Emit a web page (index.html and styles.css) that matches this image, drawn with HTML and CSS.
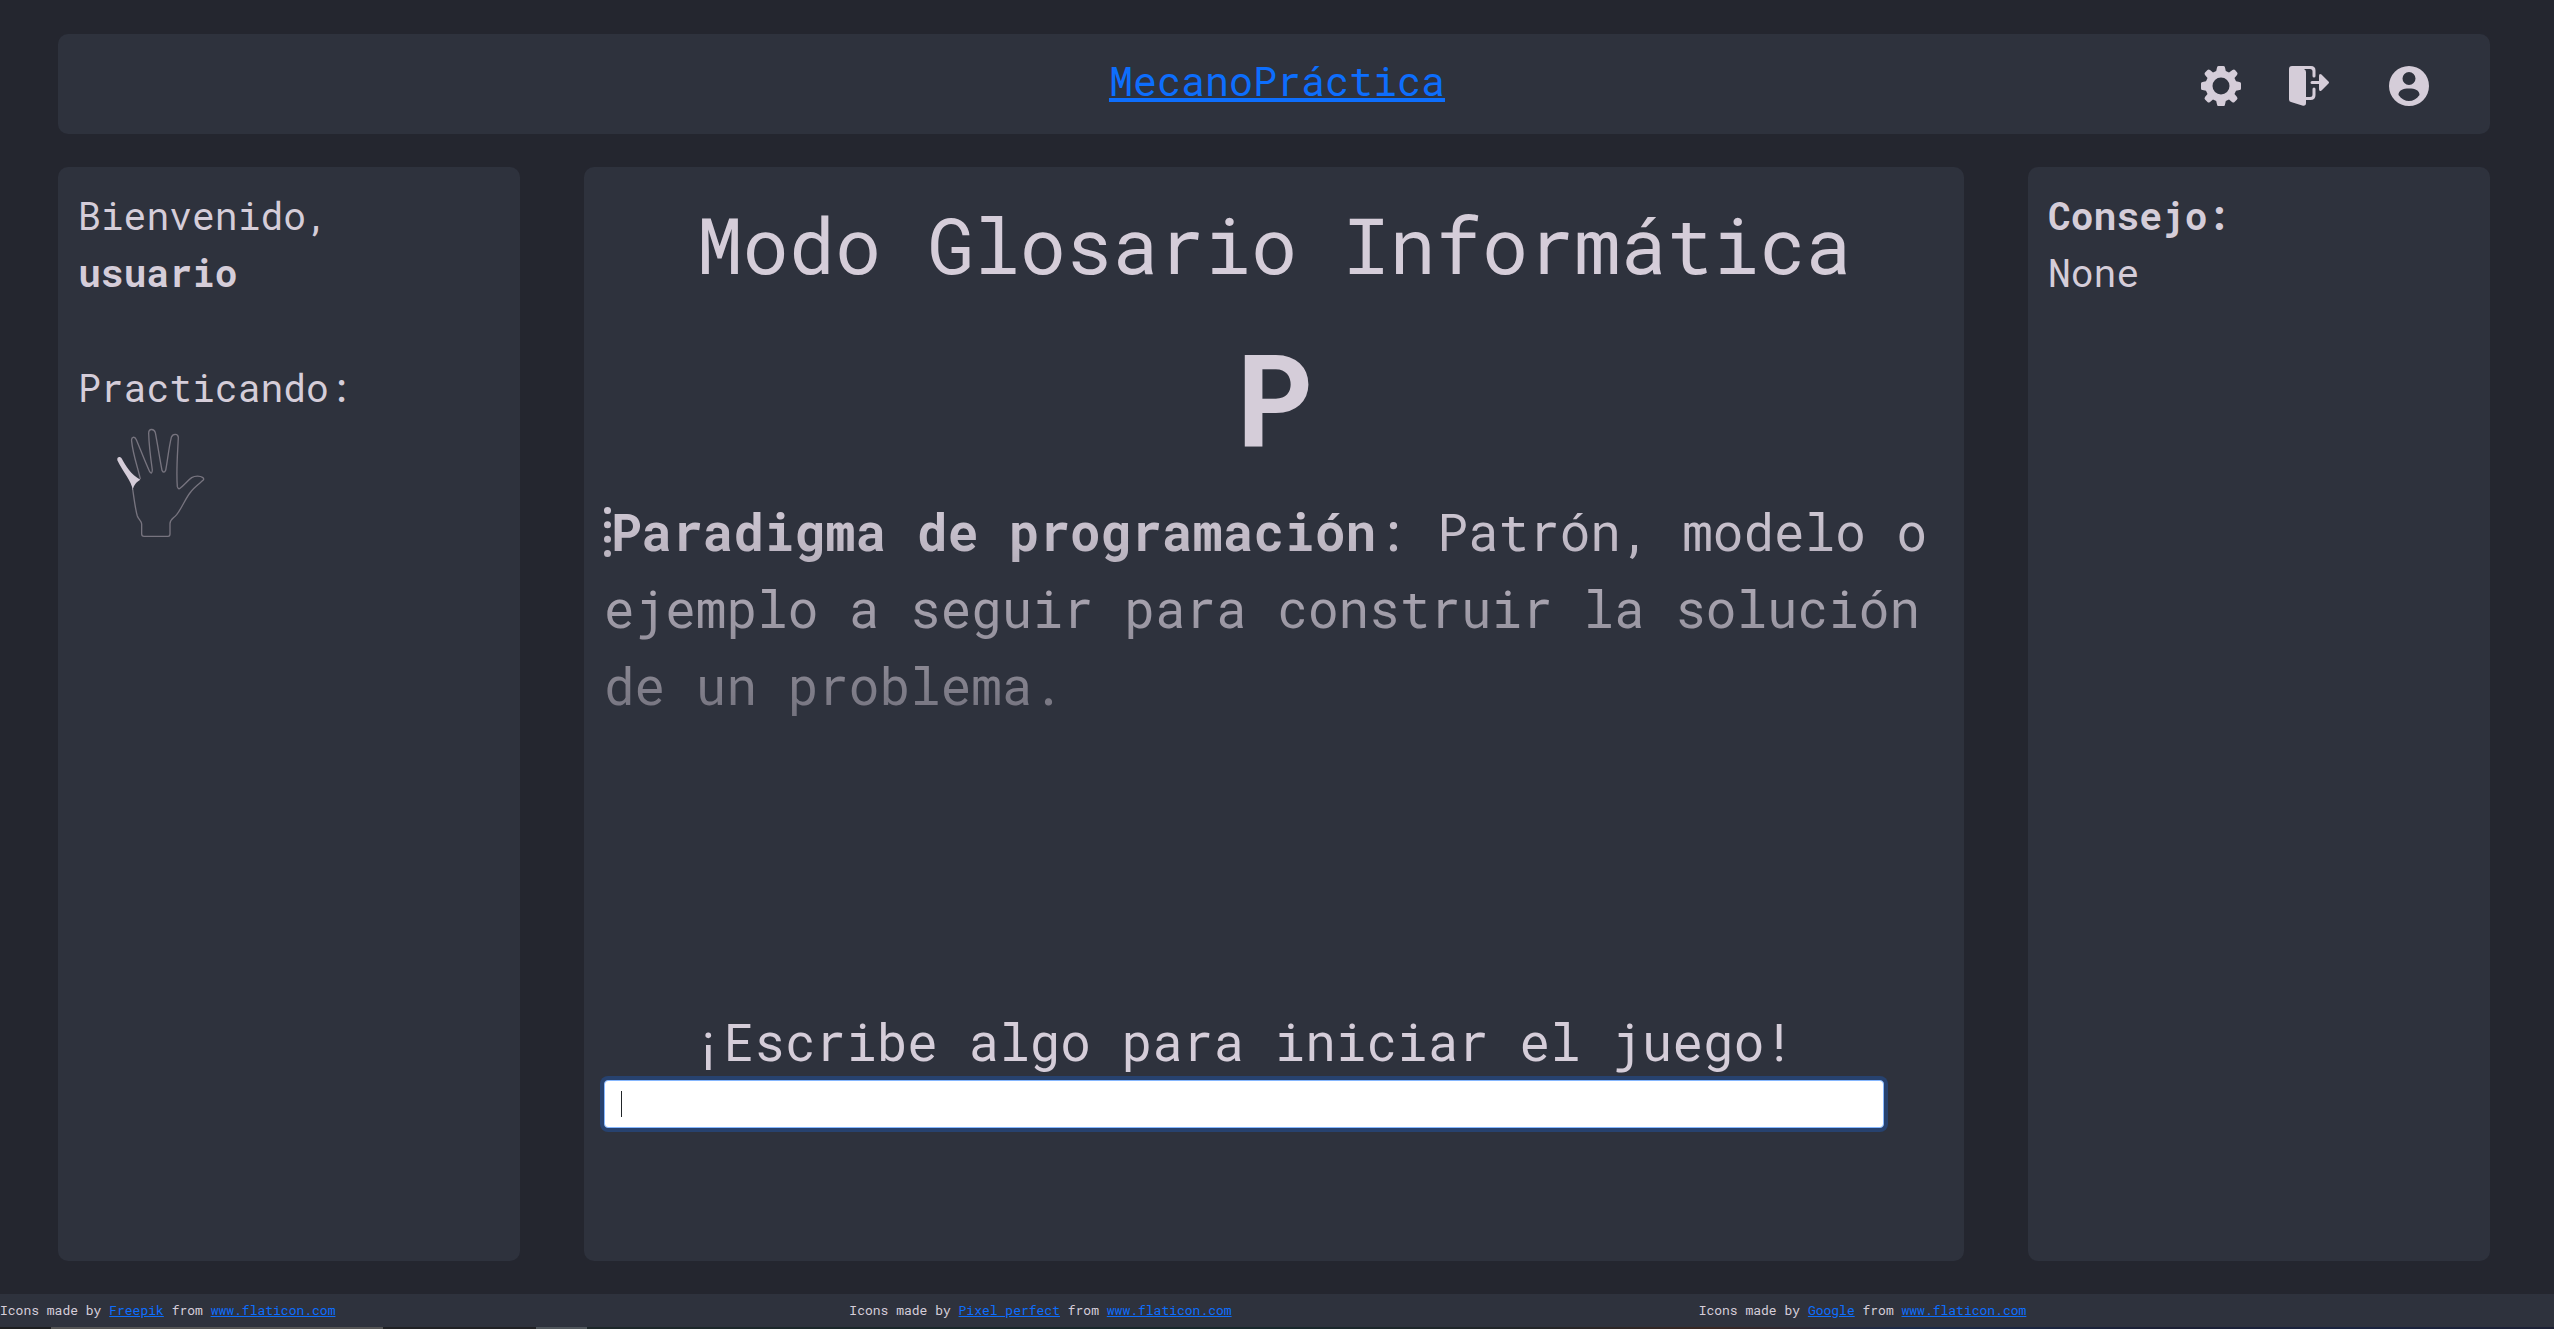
FILE: index.html
```html
<!DOCTYPE html>
<html lang="es">
<head>
<meta charset="utf-8">
<meta name="viewport" content="width=device-width, initial-scale=1">
<title>MecanoPráctica</title>
<link rel="stylesheet" href="styles.css">
</head>
<body>
<div class="page">
  <header class="panel topbar">
    <a class="brand" href="#">MecanoPráctica</a>
    <nav class="actions">
      <a href="#" aria-label="Ajustes"><svg class="icon" viewBox="0 0 40 40"><path fill-rule="evenodd" d="M17.500 0h5Q24 0 24 1.500L24.800 5L28 6.500L31.500 4Q33 3 34 4L36.200 6.500Q37 7.500 36 9L33.500 12L35 15.200L38.500 16Q40 16 40 17.500V22.500Q40 24 38.500 24L35 24.800L33.500 28L36 31Q37 32.500 36 33.500L33.500 36Q32.500 37 31 36L28 33.500L24.800 35L24 38.500Q24 40 22.500 40H17.500Q16 40 16 38.500L15.200 35L12 33.500L9 36Q7.500 37 6.500 36L4 33.500Q3 32.500 4 31L6.500 28L5 24.800L1.500 24Q0 24 0 22.500V17.500Q0 16 1.500 16L5 15.200L6.500 12L4 9Q3 7.500 4 6.500L6.500 4Q7.500 3 9 4L12 6.500L15.200 5L16 1.500Q16 0 17.500 0zM20 11.500a8.500 8.500 0 1 0 0 17a8.500 8.500 0 1 0 0-17z"/></svg></a>
      <a href="#" aria-label="Salir"><svg class="icon" viewBox="0 0 40 40"><path fill-rule="evenodd" d="M3 0h19q4.500 0 4.500 4.500V10a1.500 1.500 0 0 1-3 0V5.500Q23.500 3 21 3h-6q2 1 2 3v25h4q2.500 0 2.500-2.500V23a1.500 1.500 0 0 1 3 0v6q0 5-5 5H17v3q0 3-3 2.700L2 36q-2-.5-2-2.500V3Q0 0 3 0z"/><path d="M23 15h7v-5q0-3 2.500-1.500l7 7q1 1 0 2l-7 7Q30 26 30 23v-5h-7a1.500 1.500 0 0 1 0-3z"/></svg></a>
      <a class="profile" href="#" aria-label="Perfil"><svg class="icon" viewBox="0 0 40 40"><path fill-rule="evenodd" d="M20 0a20 20 0 1 0 0 40a20 20 0 1 0 0-40zM20 6a6.500 6.500 0 1 1 0 13a6.500 6.500 0 1 1 0-13zM20 22.500c6 0 10.500 1.500 10.500 6.500c-3 4-6.500 6-10.500 6s-7.500-2-10.500-6c0-5 4.500-6.500 10.500-6.500z"/></svg></a>
    </nav>
  </header>

  <main class="columns">
    <aside class="panel side">
      <p>Bienvenido,<br><strong>usuario</strong></p>
      <p class="section">Practicando:</p>
      <svg class="hand" viewBox="24 0 300 375" role="img" aria-label="Meñique izquierdo"><path class="outline" d="M68 207C72 235 76 268 82 288C86 300 95 303 95 312V342Q95 349 102 349H174Q180 349 180 342V312C179 298 190 296 200 284C217 262 225 237 242 216C252 202 269 190 279 181Q283 177 279 173C270 167 255 167 245 173C233 181 224 194 211 204Q205 210 202 200C198 150 203 100 205 52C204 40 188 40 184 52C176 85 173 120 167 151Q162 162 156 151C149 115 143 75 136 38C132 25 116 25 116 40C117 80 122 115 127 150Q126 165 119 155C105 125 92 90 79 59C74 48 63 50 65 64C69 105 83 140 91 177"/><path class="finger" d="M68 210C66 185 37 154 22 121C20 110 31 108 36 117C48 138 62 163 91 179C78 187 72 194 68 210z"/></svg>
    </aside>

    <section class="panel game">
      <h1>Modo Glosario Informática</h1>
      <p class="key">P</p>
      <p class="lesson"><span class="cursor"></span><strong>Paradigma de programación</strong>: Patrón, modelo o ejemplo a seguir para construir la solución de un problema.</p>
      <form class="entry">
        <label for="answer">¡Escribe algo para iniciar el juego!</label>
        <span class="field"><input id="answer" type="text" autocomplete="off"></span>
      </form>
    </section>

    <aside class="panel side">
      <p><strong>Consejo:</strong><br>None</p>
    </aside>
  </main>

  <footer class="credits">
    <p>Icons made by <a href="#">Freepik</a> from <a href="#">www.flaticon.com</a></p>
    <p>Icons made by <a href="#">Pixel perfect</a> from <a href="#">www.flaticon.com</a></p>
    <p>Icons made by <a href="#">Google</a> from <a href="#">www.flaticon.com</a></p>
  </footer>
  <div class="strip"></div>
</div>
</body>
</html>
```
FILE: styles.css
```css
* { box-sizing: border-box; }

body {
  margin: 0;
  background: #24262f;
  color: #d5cdd9;
  font-family: "Roboto Mono", "DejaVu Sans Mono", monospace;
  font-size: 38px;
  line-height: 57px;
}

h1, p { margin: 0; font-weight: 400; }

a { color: #0d6efd; }

.page {
  min-height: 100vh;
  display: flex;
  flex-direction: column;
  padding-top: 34px;
}

.panel {
  background: #2e323d;
  border-radius: 10px;
}

.topbar {
  display: grid;
  grid-template-columns: 1fr auto 1fr;
  align-items: center;
  min-height: 100px;
  margin: 0 64px 33px 58px;
  padding: 0 60px;
}

.brand {
  grid-column: 2;
  font-size: 40px;
  line-height: 60px;
  padding: 0 0 6px 6px;
}

.actions {
  display: flex;
  justify-content: flex-end;
  gap: 48px;
  padding: 3px 1px 0 0;
}

.actions a { display: flex; color: #d5cdd9; }
.actions .profile { margin-left: 12px; }

.icon {
  width: 40px;
  height: 40px;
  fill: currentColor;
}

.columns {
  flex: 1;
  display: grid;
  grid-template-columns: 77fr 230fr 77fr;
  gap: 64px;
  margin: 0 64px 33px 58px;
}

.side { padding: 20px; }
.section { margin-top: 58px; }

.hand {
  display: block;
  width: 100px;
  height: 125px;
  margin: 4px 0 0 40px;
  overflow: visible;
}

.outline { fill: none; stroke: #77747f; stroke-width: 4; }
.finger { fill: #d5cdd9; }

.game {
  display: flex;
  flex-direction: column;
  padding: 20px;
}

h1 {
  font-size: 77px;
  line-height: 114px;
  text-align: center;
}

.key {
  font-size: 128px;
  line-height: 192px;
  font-weight: 700;
  text-align: center;
}

.lesson {
  min-height: 385px;
  font-size: 51px;
  line-height: 77px;
  -webkit-mask-image: linear-gradient(#000, transparent);
  mask-image: linear-gradient(#000, transparent);
}

.cursor {
  display: inline-block;
  height: 50px;
  border-left: 7px dotted #d5cdd9;
  vertical-align: -6px;
}

.entry {
  width: 1280px;
  max-width: 100%;
  margin-top: 125px;
}

label {
  display: block;
  font-size: 51px;
  line-height: 77px;
  text-align: center;
}

.field {
  display: block;
  position: relative;
}

.field::after {
  content: "";
  position: absolute;
  left: 17px;
  top: 11px;
  width: 1px;
  height: 26px;
  background: #212529;
}

.field input {
  display: block;
  width: 100%;
  height: 48px;
  padding: 6px 16px;
  border: 1px solid #86b7fe;
  border-radius: 4px;
  outline: 0;
  background: #fff;
  box-shadow: 0 0 0 4px #27426f;
  color: #212529;
  font: inherit;
  font-size: 20px;
}

.credits {
  display: grid;
  grid-template-columns: repeat(3, 1fr);
  padding-right: 6px;
  background: #2e323d;
  font-size: 13px;
  line-height: 33px;
}

/* thin coloured edge along the bottom of the window */
.strip {
  height: 2px;
  background: linear-gradient(90deg, #1d1e20 2%, #555 2% 15%, #202124 15% 21%, #50565b 21% 23%, #1d2729 23%, #18282c 50%, #222528 60%, #3a2823 67%, #1b2b4b 75%, #1b1f33 85%, #1a2440 92%, #1d2135);
}
```
